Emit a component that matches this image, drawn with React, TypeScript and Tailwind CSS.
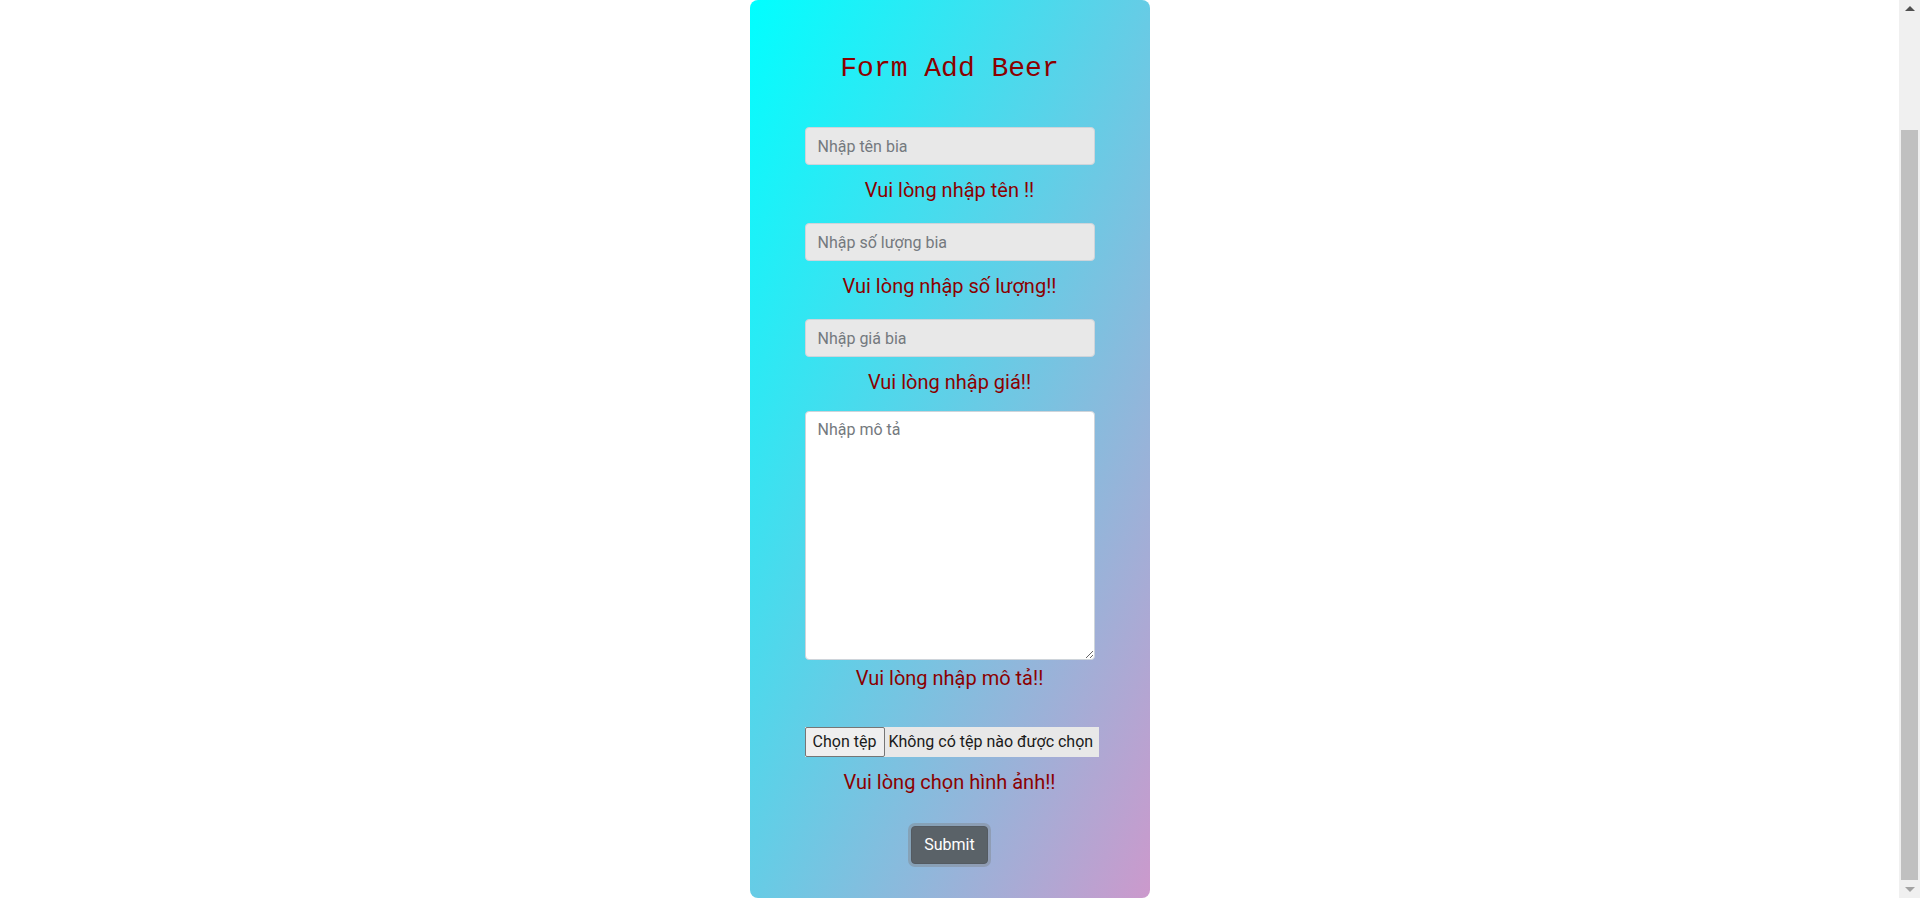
import React from "react";

const fieldCls =
  "w-[290px] h-[38px] rounded-[4px] border border-[#ced4da] bg-[#e8e8e8] px-3 text-[16px] text-[#495057] placeholder:text-[#74797e] outline-none";

const ErrorText = ({ children, className = "" }: { children: React.ReactNode; className?: string }) => (
  <p className={`text-center text-[20px] leading-[30px] text-[#8b0000] ${className}`}>{children}</p>
);

const FakeScrollbar = () => (
  <div className="flex w-[21px] shrink-0 flex-col bg-[#f0f0f0]">
    {/* mũi tên lên */}
    <div className="flex h-[17px] items-center justify-center">
      <div className="h-0 w-0 border-x-[5px] border-b-[5px] border-x-transparent border-b-[#505050]" />
    </div>
    <div className="flex-1">
      <div className="mx-[2px] mt-[113px] h-[750px] bg-[#c0c0c0]" />
    </div>
    {/* mũi tên xuống */}
    <div className="flex h-[17px] items-center justify-center">
      <div className="h-0 w-0 border-x-[5px] border-t-[5px] border-x-transparent border-t-[#a3a3a3]" />
    </div>
  </div>
);

export default function App() {
  return (
    <div className="flex h-[898px] w-full overflow-hidden bg-white font-['Roboto',sans-serif]">
      <main className="flex flex-1 justify-center">
        <div className="flex h-[898px] w-[400px] flex-col items-center rounded-[8px] bg-[linear-gradient(to_bottom_right,#00ffff,#cc99cc)] pt-[52px]">
          <h3 className="font-['Liberation_Mono',monospace] text-[28px] leading-[34px] text-[#8b0000]">
            Form Add Beer
          </h3>

          <input className={`${fieldCls} mt-[41px]`} placeholder="Nhập tên bia" />
          <ErrorText className="mt-[10px]">Vui lòng nhập tên !!</ErrorText>

          <input className={`${fieldCls} mt-[18px]`} placeholder="Nhập số lượng bia" />
          <ErrorText className="mt-[10px]">Vui lòng nhập số lượng!!</ErrorText>

          <input className={`${fieldCls} mt-[18px]`} placeholder="Nhập giá bia" />
          <ErrorText className="mt-[10px]">Vui lòng nhập giá!!</ErrorText>

          <textarea
            className="mt-[14px] h-[249px] w-[290px] rounded-[4px] border border-[#ced4da] bg-white px-3 py-[6px] text-[16px] leading-[24px] text-[#495057] placeholder:text-[#74797e] outline-none"
            placeholder="Nhập mô tả"
          />
          <ErrorText className="mt-[3px]">Vui lòng nhập mô tả!!</ErrorText>

          {/* chọn tệp */}
          <div className="mt-[34px] w-[290px]">
            <div className="flex h-[30px] w-[294px] items-stretch whitespace-nowrap bg-[#e8e8e8] text-[16px] text-[#1a1a1a]">
              <button className="w-[80px] rounded-[2px] border border-[#767676] bg-[#efefef] text-[16px]">
                Chọn tệp
              </button>
              <span className="flex items-center pl-[4px]">Không có tệp nào được chọn</span>
            </div>
          </div>
          <ErrorText className="mt-[10px]">Vui lòng chọn hình ảnh!!</ErrorText>

          <button className="mt-[29px] h-[38px] w-[77px] rounded-[4px] border border-[#545b62] bg-[#5a6268] text-[16px] text-white shadow-[0_0_0_3px_rgba(130,138,145,0.5)]">
            Submit
          </button>
        </div>
      </main>
      <FakeScrollbar />
    </div>
  );
}
